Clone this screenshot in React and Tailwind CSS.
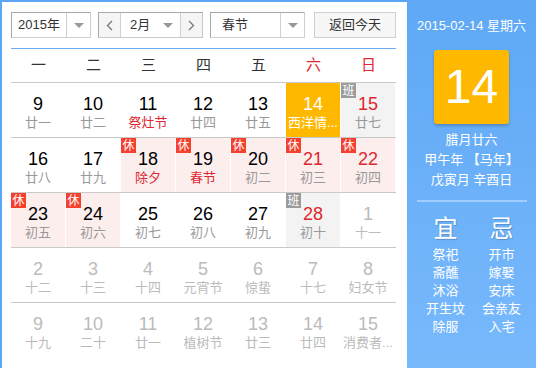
import React from 'react'

const FONT = { fontFamily: '"Liberation Sans", Arial, "Noto Sans CJK SC", sans-serif' }

// kind: 'cur' | 'other'; badge: '休' | '班'
const rows = [
  [
    { d: 9, l: '廿一' }, { d: 10, l: '廿二' }, { d: 11, l: '祭灶节', fest: true },
    { d: 12, l: '廿四' }, { d: 13, l: '廿五' }, { d: 14, l: '西洋情...', today: true },
    { d: 15, l: '廿七', badge: '班' },
  ],
  [
    { d: 16, l: '廿八' }, { d: 17, l: '廿九' }, { d: 18, l: '除夕', fest: true, badge: '休' },
    { d: 19, l: '春节', fest: true, badge: '休' }, { d: 20, l: '初二', badge: '休' },
    { d: 21, l: '初三', badge: '休' }, { d: 22, l: '初四', badge: '休' },
  ],
  [
    { d: 23, l: '初五', badge: '休' }, { d: 24, l: '初六', badge: '休' }, { d: 25, l: '初七' },
    { d: 26, l: '初八' }, { d: 27, l: '初九' }, { d: 28, l: '初十', badge: '班' },
    { d: 1, l: '十一', other: true },
  ],
  [
    { d: 2, l: '十二', other: true }, { d: 3, l: '十三', other: true }, { d: 4, l: '十四', other: true },
    { d: 5, l: '元宵节', other: true }, { d: 6, l: '惊蛰', other: true }, { d: 7, l: '十七', other: true },
    { d: 8, l: '妇女节', other: true },
  ],
  [
    { d: 9, l: '十九', other: true }, { d: 10, l: '二十', other: true }, { d: 11, l: '廿一', other: true },
    { d: 12, l: '植树节', other: true }, { d: 13, l: '廿三', other: true }, { d: 14, l: '廿四', other: true },
    { d: 15, l: '消费者...', other: true },
  ],
]

const weekdays = ['一', '二', '三', '四', '五', '六', '日']

function Caret() {
  return <span className="w-0 h-0 border-l-[5px] border-r-[5px] border-t-[5px] border-l-transparent border-r-transparent border-t-[#999]" />
}

function Cell({ c, col }) {
  const weekend = col >= 5
  let bg = ''
  if (c.today) bg = 'bg-[#ffb800]'
  else if (c.badge === '休') bg = 'bg-[#fdeeee]'
  else if (c.badge === '班') bg = 'bg-[#f3f3f3]'

  let num = 'text-black'
  if (c.today) num = 'text-white'
  else if (c.other) num = 'text-[#bbbbbb]'
  else if (weekend) num = 'text-[#e0262e]'

  let lunar = 'text-[#999999]'
  if (c.today) lunar = 'text-white'
  else if (c.other) lunar = 'text-[#bbbbbb]'
  else if (c.fest) lunar = 'text-[#e0262e]'

  return (
    <div className="w-[55px] h-[54px] pr-px">
      <div className={`relative h-full flex flex-col items-center ${bg}`}>
        {c.badge && (
          <span
            className={`absolute left-0 top-0 w-[15px] h-[15px] flex items-center justify-center text-[12px] leading-none text-white ${c.badge === '休' ? 'bg-[#f4402e]' : 'bg-[#9b9b9b]'}`}
          >
            {c.badge}
          </span>
        )}
        <span className={`mt-[10px] text-[18px] leading-[22px] ${num}`}>{c.d}</span>
        <span className={`text-[13px] leading-[16px] whitespace-nowrap ${lunar}`}>{c.l}</span>
      </div>
    </div>
  )
}

export default function App() {
  return (
    <div className="w-[536px] h-[368px] flex bg-white overflow-hidden" style={FONT}>
      {/* calendar */}
      <div className="w-[407px] h-full border-l-2 border-t-2 border-[#5aa6f5] pl-[9px] pt-[10px]">
        <div className="flex items-center h-[26px] text-[13px] text-[#333]">
          <div className="w-[80px] h-full flex border border-[#a8a8a8] border-r-[#cfcfcf] border-b-[#cfcfcf]">
            <span className="flex-1 flex items-center justify-center">2015年</span>
            <span className="w-[24px] flex items-center justify-center border-l border-[#d0d0d0]"><Caret /></span>
          </div>
          <div className="ml-[7px] w-[105px] h-full flex border border-[#a8a8a8] border-r-[#c8c8c8] border-b-[#c8c8c8]">
            <span className="w-[22px] flex items-center justify-center bg-[#f5f5f5] border-r border-[#d0d0d0] text-[#666]">
              <svg width="7" height="11" viewBox="0 0 7 11"><path d="M6 1 L1.5 5.5 L6 10" fill="none" stroke="#777" strokeWidth="1.3" /></svg>
            </span>
            <span className="flex-1 flex items-center justify-between pl-[9px] pr-[7px]">
              <span>2月</span>
              <Caret />
            </span>
            <span className="w-[22px] flex items-center justify-center bg-[#f5f5f5] border-l border-[#d0d0d0]">
              <svg width="7" height="11" viewBox="0 0 7 11"><path d="M1 1 L5.5 5.5 L1 10" fill="none" stroke="#777" strokeWidth="1.3" /></svg>
            </span>
          </div>
          <div className="ml-[7px] w-[95px] h-full flex border border-[#a8a8a8] border-r-[#cfcfcf] border-b-[#cfcfcf]">
            <span className="flex-1 flex items-center pl-[11px]">春节</span>
            <span className="w-[24px] flex items-center justify-center border-l border-[#d0d0d0]"><Caret /></span>
          </div>
          <button className="ml-[9px] w-[82px] h-full border border-[#d0d0d0] bg-[#f7f7f7] text-[13px] text-[#333] flex items-center justify-center">
            返回今天
          </button>
        </div>

        <div className="w-[385px] mt-[10px] border-t border-[#6aaef6] h-[34px] flex items-center">
          {weekdays.map((w, i) => (
            <span key={w} className={`w-[55px] text-center text-[15px] ${i >= 5 ? 'text-[#e0262e]' : 'text-[#333]'}`}>{w}</span>
          ))}
        </div>

        <div className="w-[385px]">
          {rows.map((r, ri) => (
            <div key={ri} className="flex border-t border-[#c9c9c9]">
              {r.map((c, ci) => <Cell key={ci} c={c} col={ci} />)}
            </div>
          ))}
        </div>
      </div>

      {/* side panel */}
      <div className="w-[129px] h-full bg-gradient-to-b from-[#5ea8f5] to-[#78b9fc] flex flex-col items-center text-white">
        <div className="mt-[18px] text-[13px] leading-[16px]">2015-02-14 星期六</div>
        <div className="mt-[16px] w-[75px] h-[74px] rounded-[3px] bg-[#ffb800] shadow-[0_2px_3px_rgba(0,0,0,0.2)] flex items-center justify-center text-[48px] leading-none">
          14
        </div>
        <div className="mt-[6px] flex flex-col items-center text-[13px] leading-[20px]">
          <span>腊月廿六</span>
          <span>甲午年 【马年】</span>
          <span>戊寅月 辛酉日</span>
        </div>
        <div className="mt-[10px] w-[110px] h-[2px] bg-white/35" />
        <div className="mt-[12px] flex justify-center gap-0 pl-[4px]">
          {[
            ['宜', ['祭祀', '斋醮', '沐浴', '开生坟', '除服']],
            ['忌', ['开市', '嫁娶', '安床', '会亲友', '入宅']],
          ].map(([h, items]) => (
            <div key={h} className="w-[56px] flex flex-col items-center">
              <span className="text-[24px] leading-[30px] [text-shadow:1px_1px_1px_rgba(0,0,0,0.2)]">{h}</span>
              <div className="mt-[2px] flex flex-col items-center text-[13px] leading-[18px]">
                {items.map(t => <span key={t}>{t}</span>)}
              </div>
            </div>
          ))}
        </div>
      </div>
    </div>
  )
}
